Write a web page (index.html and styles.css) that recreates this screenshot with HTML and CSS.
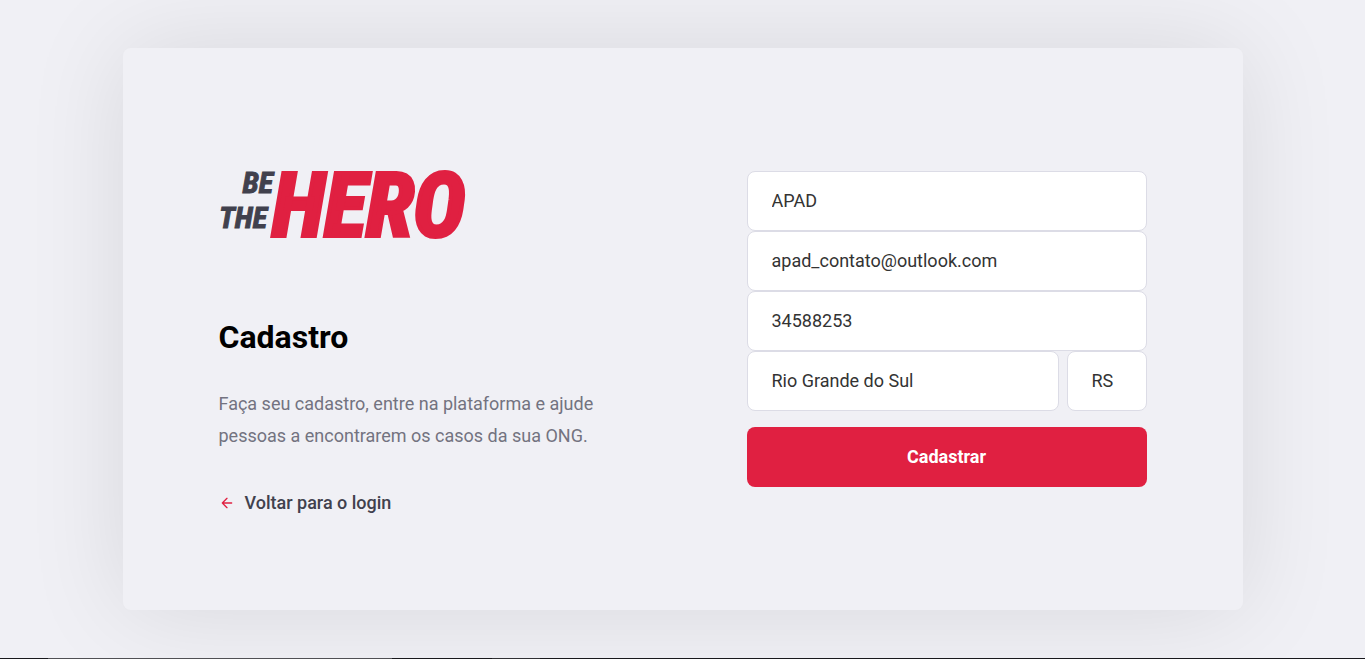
FILE: index.html
```html
<!DOCTYPE html>
<html lang="pt-BR">
<head>
<meta charset="utf-8">
<meta name="viewport" content="width=device-width, initial-scale=1">
<title>Be The Hero</title>
<link rel="stylesheet" href="styles.css">
</head>
<body>
<main class="register-container">
  <div class="content">
    <section class="intro">
      <svg class="logo" viewBox="0 0 250 106" role="img" aria-label="Be The Hero">
        <text class="logo-small" x="54" y="49" text-anchor="end">BE</text>
        <text class="logo-small" x="48" y="84" text-anchor="end">THE</text>
        <text class="logo-large" x="53" y="92">HERO</text>
      </svg>
      <h1 class="title">Cadastro</h1>
      <p class="description">Faça seu cadastro, entre na plataforma e ajude pessoas a encontrarem os casos da sua ONG.</p>
      <a class="back-link" href="#">
        <svg class="back-icon" viewBox="0 0 24 24" aria-hidden="true"><path d="M19 12H5M12 19l-7-7 7-7"/></svg>
        Voltar para o login
      </a>
    </section>
    <form class="form">
      <input class="field" type="text" aria-label="Nome da ONG" value="APAD">
      <input class="field" type="email" aria-label="E-mail" value="apad_contato@outlook.com">
      <input class="field" type="text" aria-label="WhatsApp" value="34588253">
      <div class="input-group">
        <input class="field" type="text" aria-label="Cidade" value="Rio Grande do Sul">
        <input class="field field-uf" type="text" aria-label="UF" value="RS">
      </div>
      <button class="button" type="submit">Cadastrar</button>
    </form>
  </div>
</main>
<div class="bottom-edge"></div>
</body>
</html>
```
FILE: styles.css
```css
* {
  margin: 0;
  padding: 0;
  box-sizing: border-box;
}

body {
  min-height: 100vh;
  display: flex;
  flex-direction: column;
  background: #f0f0f5;
  font: 400 14px Roboto, sans-serif;
  -webkit-font-smoothing: antialiased;
}

.register-container {
  flex: 1;
  width: 100%;
  max-width: 1120px;
  margin: 0 auto;
  display: flex;
  align-items: center;
}

.content {
  width: 100%;
  padding: 96px;
  display: flex;
  justify-content: space-between;
  align-items: center;
  background: #f0f0f5;
  box-shadow: 0 0 100px rgba(0, 0, 0, 0.1);
  border-radius: 8px;
}

.intro {
  width: 100%;
  max-width: 380px;
}

.logo {
  display: block;
  width: 250px;
  height: 106px;
  margin-bottom: 68px;
  overflow: visible;
}

.logo-small,
.logo-large {
  font-family: "Liberation Sans Narrow", "Roboto Condensed", "Open Sans Condensed", "Liberation Sans", sans-serif;
  font-weight: 700;
  font-style: italic;
  stroke-linejoin: miter;
}

.logo-small {
  font-size: 30px;
  fill: #41414d;
  stroke: #41414d;
  stroke-width: 1px;
}

.logo-large {
  font-size: 88px;
  fill: #e02041;
  stroke: #e02041;
  stroke-width: 4px;
}

.title {
  margin-bottom: 32px;
  font-size: 32px;
  line-height: 38px;
}

.description {
  font-size: 18px;
  line-height: 32px;
  color: #737380;
}

.back-link {
  display: flex;
  align-items: center;
  gap: 10px;
  margin-top: 40px;
  color: #41414d;
  font-size: 18px;
  line-height: 22px;
  font-weight: 500;
  text-decoration: none;
}

.back-icon {
  width: 16px;
  height: 16px;
  fill: none;
  stroke: #e02041;
  stroke-width: 2;
  stroke-linecap: round;
  stroke-linejoin: round;
}

.form {
  width: 100%;
  max-width: 400px;
}

.field {
  display: block;
  width: 100%;
  height: 60px;
  padding: 0 24px 2px;
  border: 1px solid #dcdce6;
  border-radius: 8px;
  background: #fff;
  color: #333;
  font: 400 18px Roboto, sans-serif;
}

.input-group {
  display: flex;
  gap: 8px;
}

.field-uf {
  flex: 0 0 80px;
}

.button {
  display: block;
  width: 100%;
  height: 60px;
  margin-top: 16px;
  padding-bottom: 2px;
  border: 0;
  border-radius: 8px;
  background: #e02041;
  color: #fff;
  font: 700 18px Roboto, sans-serif;
  cursor: pointer;
}

.bottom-edge {
  height: 1px;
  background: linear-gradient(90deg, #18181c 48px, #505054 48px 392px, #18181c 392px 492px, #303034 492px 540px, #18181c 540px);
}
```
